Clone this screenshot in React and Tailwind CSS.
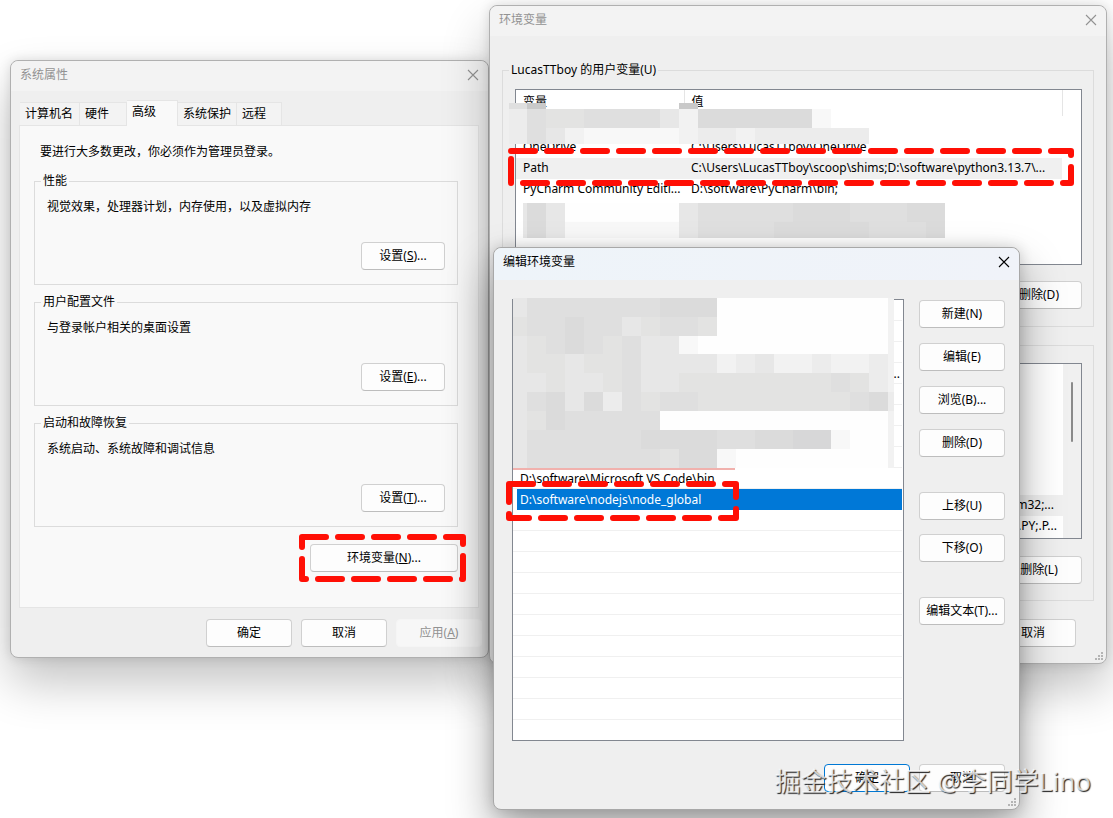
const pathEntries = ['', '', '', '...', '', '', '', '', 'D:\\software\\Microsoft VS Code\\bin', 'D:\\software\\nodejs\\node_global', '', '', '', '', '', '', '', '', '', '', '']

const userVars = [
  { name: '', value: '' },
  { name: 'OneDrive', value: 'C:\\Users\\LucasTTboy\\OneDrive' },
  { name: 'Path', value: 'C:\\Users\\LucasTTboy\\scoop\\shims;D:\\software\\python3.13.7\\...', active: true },
  { name: 'PyCharm Community Editi...', value: 'D:\\software\\PyCharm\\bin;' },
]

const tabs = [
  { label: '计算机名', style: 'w-[60px] h-[23px] bg-[#f3f3f3]' },
  { label: '硬件', style: 'w-[47px] h-[23px] bg-[#f3f3f3]' },
  { label: '高级', style: 'w-[51px] h-[26px] bg-[#f9f9f9] -mb-px pb-1', active: true },
  { label: '系统保护', style: 'w-[59px] h-[23px] bg-[#f3f3f3]' },
  { label: '远程', style: 'w-[45px] h-[23px] bg-[#f3f3f3]' },
]

const groups = [
  { title: '性能', text: '视觉效果，处理器计划，内存使用，以及虚拟内存', hotkey: 'S' },
  { title: '用户配置文件', text: '与登录帐户相关的桌面设置', hotkey: 'E' },
  { title: '启动和故障恢复', text: '系统启动、系统故障和调试信息', hotkey: 'T' },
]

// one letter per tile, dark to light
const shades = {
  x: '#c9c9c9', a: '#d7d7d8', b: '#dbdbdb', c: '#dfdfdf', d: '#e3e3e2', e: '#e7e7e7',
  f: '#ececec', g: '#f2f2f2', h: '#f8f8f8', w: '#fefefe',
}

const pathTiles = [
  'ecccccccbbbwwwwwwwwwg',
  'dccbccedccdwwwwwwwwwg',
  'edcbcdceehwwwwwwwwwwg',
  'eddeddceeeegfeggfggfg',
  'eedeedceeddddddddcdfg',
  'ecbebfcdccddddddddcbf',
  'edbcccccwwwwwwwwwwwwg',
  'eccccccbbbbccbbaahwwg',
  'ecccccccdbbhwwwwwwwwg',
]

const varTilesTop = ['cx.......x', 'fcddcccceg'.concat('bbbbbbh'), 'fceghhhhhgffgffffff']
const varTilesBottom = ['ebewwwwwwecccccbbbcccbb', 'ebehhhhhheccccbbbbbcccb']

function Tiles({ rows, heights, first, className }) {
  let top = 0
  const height = heights.reduce((a, b) => a + b, 0)
  const width = first + 19 * (Math.max(...rows.map((r) => r.length)) - 1)
  return (
    <svg className={className} width={width} height={height} shapeRendering="crispEdges" aria-hidden="true">
      {rows.map((row, r) => {
        const y = top
        top += heights[r]
        return [...row].map((c, i) =>
          c === '.' ? null : (
            <rect
              key={`${r}-${i}`}
              x={i === 0 ? 0 : first + (i - 1) * 19}
              y={y}
              width={i === 0 ? first : 19}
              height={heights[r]}
              fill={shades[c]}
            />
          ),
        )
      })}
    </svg>
  )
}

function Highlight({ width, height, className }) {
  return (
    <svg className={`pointer-events-none absolute overflow-visible ${className}`} width={width} height={height} aria-hidden="true">
      <path
        d={`M0 0H${width}V${height}H0Z`}
        fill="none"
        stroke="#ff0f05"
        strokeWidth="6"
        strokeLinecap="round"
        strokeLinejoin="round"
        strokeDasharray="24 12"
      />
    </svg>
  )
}

function TitleBar({ title, active }) {
  return (
    <header
      className={`flex items-center justify-between rounded-t-lg pr-[9px] pl-[9px] ${
        active ? 'h-8 bg-linear-to-r from-[#eef4f9] to-[#f0f3f9] pb-1 text-black' : 'h-[30px] bg-[#f3f3f3] pb-[2px] text-[#929292]'
      }`}
    >
      <h2>{title}</h2>
      <button type="button" aria-label="关闭">
        <svg className="size-3" viewBox="0 0 12 12" fill="none" stroke="currentColor" strokeWidth="1.1">
          <path d="M1 1l10 10M11 1L1 11" />
        </svg>
      </button>
    </header>
  )
}

function Button({ children, className = 'w-[86px]', disabled }) {
  return (
    <button
      type="button"
      disabled={disabled}
      className={`h-7 shrink-0 rounded border pb-px whitespace-nowrap ${
        disabled ? 'border-[#f5f5f5] bg-[#f7f7f7] text-[#929292]' : 'border-[#d0d0d0] border-b-[#bdbdbd] bg-[#fdfdfd]'
      } ${className}`}
    >
      {children}
    </button>
  )
}

function Grip() {
  return (
    <svg className="absolute right-[2px] bottom-[2px]" width="9" height="9" fill="#b4b4b4" aria-hidden="true">
      <path d="M6 0h2v2H6zM3 3h2v2H3zM6 3h2v2H6zM0 6h2v2H0zM3 6h2v2H3zM6 6h2v2H6z" />
    </svg>
  )
}

function SystemProperties() {
  return (
    <section className="absolute top-[60px] left-[10px] w-[479px] rounded-lg border border-[#b0b0b0] bg-[#efefef] shadow-[0_24px_48px_rgba(0,0,0,0.24),0_0_12px_rgba(0,0,0,0.12)]">
      <TitleBar title="系统属性" />
      <div className="pt-[9px] pr-[9px] pb-[10px] pl-2">
        <div role="tablist" className="flex items-end pl-px">
          {tabs.map(({ label, style, active }) => (
            <button
              key={label}
              type="button"
              role="tab"
              aria-selected={!!active}
              className={`border-t border-r border-[#e5e5e5] pl-[5px] text-left whitespace-nowrap ${style}`}
            >
              {label}
            </button>
          ))}
        </div>
        <div className="border border-[#e5e5e5] bg-[#f9f9f9] pt-[17px] pr-5 pb-[35px] pl-[14px]">
          <p className="mb-[11px] pl-[6px]">要进行大多数更改，你必须作为管理员登录。</p>
          <div className="flex flex-col gap-2">
            {groups.map(({ title, text, hotkey }) => (
              <fieldset key={title} className="border border-[#dcdcdc] pr-3 pb-[14px] pl-3">
                <legend className="-ml-[6px] px-[2px]">{title}</legend>
                <div className="flex h-20 flex-col justify-between pt-2">
                  <p>{text}</p>
                  <Button className="w-[84px] self-end">
                    设置(<u>{hotkey}</u>)...
                  </Button>
                </div>
              </fieldset>
            ))}
          </div>
          <div className="mt-[17px] flex justify-end">
            <Button className="w-[148px]">
              环境变量(<u>N</u>)...
            </Button>
          </div>
        </div>
        <div className="-mr-[3px] mt-[11px] flex justify-end gap-[9px]">
          <Button>确定</Button>
          <Button>取消</Button>
          <Button disabled>
            应用(<u>A</u>)
          </Button>
        </div>
      </div>
    </section>
  )
}

function EnvironmentVariables() {
  return (
    <section className="absolute top-[5px] left-[489px] w-[618px] rounded-lg border border-[#b0b0b0] bg-[#efefef] shadow-[0_24px_48px_rgba(0,0,0,0.24),0_0_12px_rgba(0,0,0,0.12)]">
      <TitleBar title="环境变量" />
      <div className="px-3 pt-[25px] pb-4">
        <fieldset className="border border-[#dcdcdc] pt-[10px] pr-[11px] pb-[17px] pl-3">
          <legend className="-ml-[6px] px-[2px]">LucasTTboy 的用户变量(U)</legend>
          <div className="relative h-44 border border-[#828790] bg-white">
            <table className="w-full table-fixed border-collapse text-left whitespace-nowrap">
              <colgroup>
                <col className="w-[168px]" />
                <col />
                <col className="w-[19px]" />
              </colgroup>
              <thead>
                <tr className="h-[26px]">
                  <th className="border-r border-[#e5e5e5] pb-[2px] pl-[7px] font-normal">变量</th>
                  <th className="border-r border-[#e5e5e5] pb-[2px] pl-[7px] font-normal">值</th>
                  <th />
                </tr>
              </thead>
              <tbody>
                {userVars.map(({ name, value, active }, i) => (
                  <tr key={i} className="h-[21px]">
                    <td className={`pb-px pl-[7px] ${active ? 'bg-[#f0f0f0]' : ''}`}>{name}</td>
                    <td className={`pb-px pl-[7px] ${active ? 'bg-[#f0f0f0]' : ''}`}>{value}</td>
                    <td />
                  </tr>
                ))}
              </tbody>
            </table>
            <Tiles rows={varTilesTop} heights={[6, 19, 16]} first={18} className="absolute top-[13px] -left-[7px]" />
            <Tiles rows={varTilesBottom} heights={[19, 16]} first={4} className="absolute top-[113px] left-[7px]" />
          </div>
          <div className="mt-4 flex justify-end">
            <Button>删除(D)</Button>
          </div>
        </fieldset>
        <fieldset className="mt-[18px] border border-[#dcdcdc] pt-[17px] pr-[11px] pb-4 pl-3">
          <div className="flex h-44 justify-end border border-[#828790] bg-white">
            <ul className="flex-1 pt-[131px] text-right">
              <li className="h-[21px] bg-[#f0f0f0] pt-px pr-[9px]">m32;...</li>
              <li className="h-[21px] pt-px pr-[6px]">.PY;.P...</li>
            </ul>
            <div className="w-[18px] bg-[#f0f0f0] pt-[18px] pl-2">
              <div className="h-[60px] w-[2px] rounded bg-[#8a8a8a]" />
            </div>
          </div>
          <div className="mt-[17px] flex justify-end">
            <Button>删除(L)</Button>
          </div>
        </fieldset>
        <div className="mt-[18px] mr-[18px] flex justify-end">
          <Button>取消</Button>
        </div>
      </div>
      <Grip />
    </section>
  )
}

function EditVariable() {
  return (
    <section className="absolute top-[247px] left-[493px] w-[527px] rounded-lg border border-[#a8a8a8] bg-[#efefef] shadow-[0_22px_44px_rgba(0,0,0,0.36),0_0_14px_rgba(0,0,0,0.16)]">
      <TitleBar title="编辑环境变量" active />
      <div className="pt-[19px] pr-[14px] pb-[17px] pl-[18px]">
        <div className="flex gap-[15px]">
          <div className="relative flex-1 border border-[#828790] bg-white">
            <ul className="pr-px">
              {pathEntries.map((entry, i) => (
                <li
                  key={i}
                  className={`h-[21px] border-b pt-[2px] pl-[7px] whitespace-nowrap last:h-5 last:border-0 ${
                    i === 9 ? 'ml-1 border-[#0078d7] bg-[#0078d7] !pl-[3px] text-white' : 'border-[#f0f0f0]'
                  } ${i === 3 ? 'pr-[2px] text-right' : ''}`}
                >
                  {entry}
                </li>
              ))}
            </ul>
            <div className="absolute -top-[2px] left-0 w-[381px] overflow-hidden">
              <Tiles
                rows={pathTiles}
                heights={[19, 19, 18, 19, 19, 19, 19, 19, 19]}
                first={14}
                className="block"
              />
              <div className="h-[2px] w-[222px] bg-[#f1b1ad]" />
            </div>
          </div>
          <div className="flex flex-col gap-[15px] pt-px">
            <Button>新建(N)</Button>
            <Button>编辑(E)</Button>
            <Button>浏览(B)...</Button>
            <Button>删除(D)</Button>
            <div className="mt-5 flex flex-col gap-[14px]">
              <Button>上移(U)</Button>
              <Button>下移(O)</Button>
            </div>
            <Button className="mt-5 w-[86px]">编辑文本(T)...</Button>
          </div>
        </div>
        <div className="mt-[23px] flex justify-end gap-[9px]">
          <Button className="w-[86px] !border-[#0078d4]">确定</Button>
          <Button>取消</Button>
        </div>
      </div>
      <Grip />
    </section>
  )
}

export default function App() {
  return (
    <main className="relative min-h-screen overflow-hidden bg-white font-['Noto_Sans','Noto_Sans_CJK_SC',sans-serif] text-[12px] leading-[18px] text-black">
      <SystemProperties />
      <EnvironmentVariables />
      <EditVariable />
      <Highlight width={161} height={42} className="top-[537px] left-[302px]" />
      <Highlight width={560} height={32} className="top-[151px] left-[511px]" />
      <Highlight width={227} height={34} className="top-[484px] left-[509px]" />
      <p className="pointer-events-none absolute right-[22px] bottom-[19px] text-[26px] leading-9 whitespace-nowrap text-white/75 [text-shadow:1px_1px_1px_#222]">
        掘金技术社区 @李同学Lino
      </p>
    </main>
  )
}
